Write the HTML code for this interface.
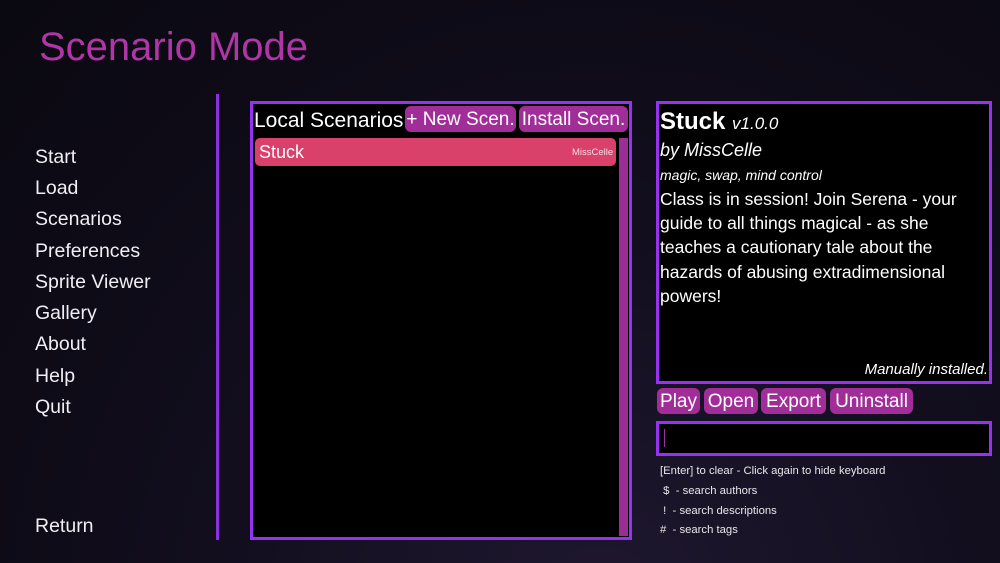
<!DOCTYPE html>
<html><head><meta charset="utf-8"><style>
*{margin:0;padding:0;box-sizing:border-box}
body{width:1000px;height:563px;overflow:hidden;font-family:"Liberation Sans",sans-serif;color:#fff;
background:radial-gradient(ellipse at 60% 110%,#1f1830 0%,#120e1e 45%,#0a0810 100%);position:relative}
.a{position:absolute;white-space:nowrap}
.m{left:35px;font-size:19.5px;color:#f0eef2}
.btn{position:absolute;background:#a12e98;border-radius:6px;color:#fff;font-size:19px;text-align:center;line-height:28px;height:26px}
.box{position:absolute;border:3px solid #9632f0;background:#000}
.h{font-size:11.3px;color:#e8e6ea;left:660px}
</style></head><body>
<div class="a" style="left:39px;top:25px;font-size:40px;color:#b035a6">Scenario Mode</div>
<div class="a m" style="top:146px">Start</div>
<div class="a m" style="top:177px">Load</div>
<div class="a m" style="top:208px">Scenarios</div>
<div class="a m" style="top:240px">Preferences</div>
<div class="a m" style="top:271px">Sprite Viewer</div>
<div class="a m" style="top:302px">Gallery</div>
<div class="a m" style="top:333px">About</div>
<div class="a m" style="top:365px">Help</div>
<div class="a m" style="top:396px">Quit</div>
<div class="a m" style="top:515px">Return</div>
<div class="a" style="left:216px;top:94px;width:3px;height:446px;background:#8a30e0"></div>

<div class="box" style="left:250px;top:101px;width:382px;height:439px"></div>
<div class="a" style="left:254px;top:109px;font-size:21px">Local Scenarios</div>
<div class="btn" style="left:405px;top:106px;width:111px">+ New Scen.</div>
<div class="btn" style="left:519px;top:106px;width:109px">Install Scen.</div>
<div class="a" style="left:255px;top:138px;width:361px;height:28px;background:#d9416a;border-radius:5px"></div>
<div class="a" style="left:259px;top:142px;font-size:18px">Stuck</div>
<div class="a" style="left:572px;top:147px;font-size:9.5px;color:#f3dbe3">MissCelle</div>
<div class="a" style="left:619px;top:138px;width:9px;height:398px;background:#9a2d96"></div>

<div class="box" style="left:656px;top:101px;width:336px;height:283px"></div>
<div class="a" style="left:660px;top:108px;font-size:24px;font-weight:bold">Stuck <span style="font-size:17px;font-weight:normal;font-style:italic">v1.0.0</span></div>
<div class="a" style="left:660px;top:140px;font-size:18px;font-style:italic">by MissCelle</div>
<div class="a" style="left:660px;top:167px;font-size:14px;font-style:italic">magic, swap, mind control</div>
<div class="a" style="left:660px;top:187px;font-size:17.5px;line-height:24.2px;white-space:normal;width:330px">Class is in session! Join Serena - your guide to all things magical - as she teaches a cautionary tale about the hazards of abusing extradimensional powers!</div>
<div class="a" style="right:12px;top:361px;font-size:15px;font-style:italic">Manually installed.</div>

<div class="btn" style="left:657px;top:388px;width:43px">Play</div>
<div class="btn" style="left:704px;top:388px;width:54px">Open</div>
<div class="btn" style="left:761px;top:388px;width:65px">Export</div>
<div class="btn" style="left:830px;top:388px;width:83px">Uninstall</div>

<div class="box" style="left:656px;top:421px;width:336px;height:35px"></div>
<div class="a" style="left:664px;top:429px;width:1px;height:18px;background:#a12e98"></div>
<div class="a h" style="top:465px">[Enter] to clear - Click again to hide keyboard</div>
<div class="a h" style="top:485px">&nbsp;$ &nbsp;- search authors</div>
<div class="a h" style="top:505px">&nbsp;! &nbsp;- search descriptions</div>
<div class="a h" style="top:524px"># &nbsp;- search tags</div>
</body></html>
